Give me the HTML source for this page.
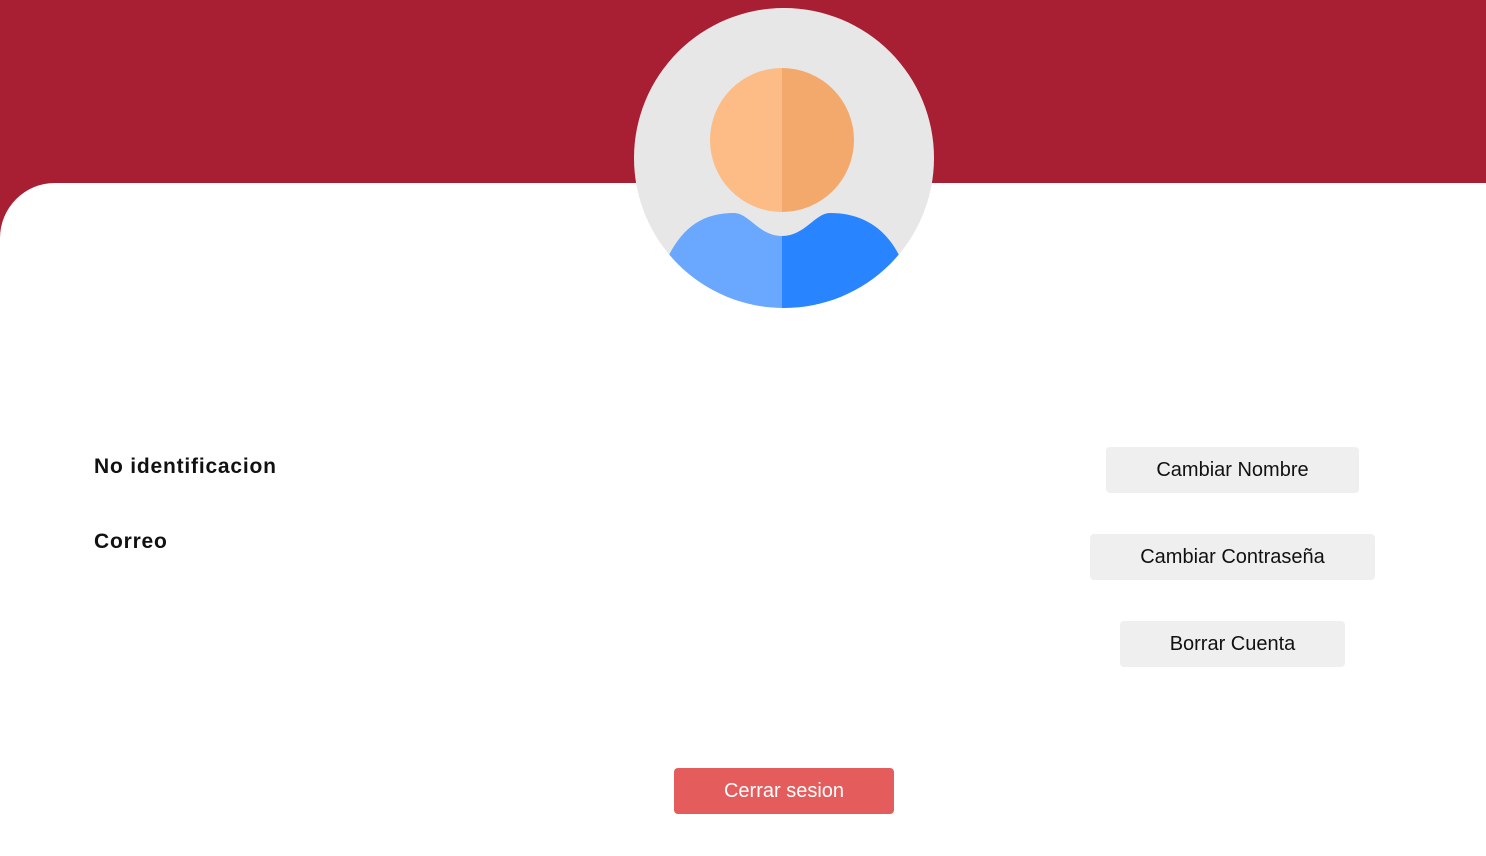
<!DOCTYPE html>
<html><head><style>
body{margin:0;width:1486px;height:856px;background:#fff;position:relative;overflow:hidden;font-family:"Liberation Sans",sans-serif}
.hdr{position:absolute;left:0;top:0;width:1486px;height:240px;background:#a81e33}
.main{position:absolute;left:0;top:183px;width:1486px;height:673px;background:#fff;border-top-left-radius:55px}
.lbl{position:absolute;left:94px;font-size:21px;font-weight:bold;color:#111;letter-spacing:0.8px}
.btn{position:absolute;background:#efefef;border-radius:4px;font-size:20px;color:#111;display:flex;align-items:center;justify-content:center}
</style></head><body>
<div class="hdr"></div><div class="main"></div>
<svg style="position:absolute;left:634px;top:8px" width="300" height="300" viewBox="0 0 300 300">
<defs><clipPath id="c"><circle cx="150" cy="150" r="150"/></clipPath></defs>
<circle cx="150" cy="150" r="150" fill="#e7e7e7"/>
<g clip-path="url(#c)">
<path d="M35 247 C50 218 70 205 100 205 C115 205 125 228 148 228 L148 310 L35 310Z" fill="#6aa8ff"/>
<path d="M148 228 C171 228 181 205 196 205 C226 205 250 218 265 247 L265 310 L148 310Z" fill="#2884ff"/>
</g>
<path d="M148 60 A72 72 0 0 0 148 204Z" fill="#fdbb85"/>
<path d="M148 60 A72 72 0 0 1 148 204Z" fill="#f4a96c"/>
</svg>
<div class="lbl" style="top:455px">No identificacion</div>
<div class="lbl" style="top:530px">Correo</div>
<div class="btn" style="left:1106px;top:447px;width:253px;height:46px">Cambiar Nombre</div>
<div class="btn" style="left:1090px;top:534px;width:285px;height:46px">Cambiar Contraseña</div>
<div class="btn" style="left:1120px;top:621px;width:225px;height:46px">Borrar Cuenta</div>
<div class="btn" style="left:674px;top:768px;width:220px;height:46px;background:#e45c5c;color:#fff">Cerrar sesion</div>
</body></html>
